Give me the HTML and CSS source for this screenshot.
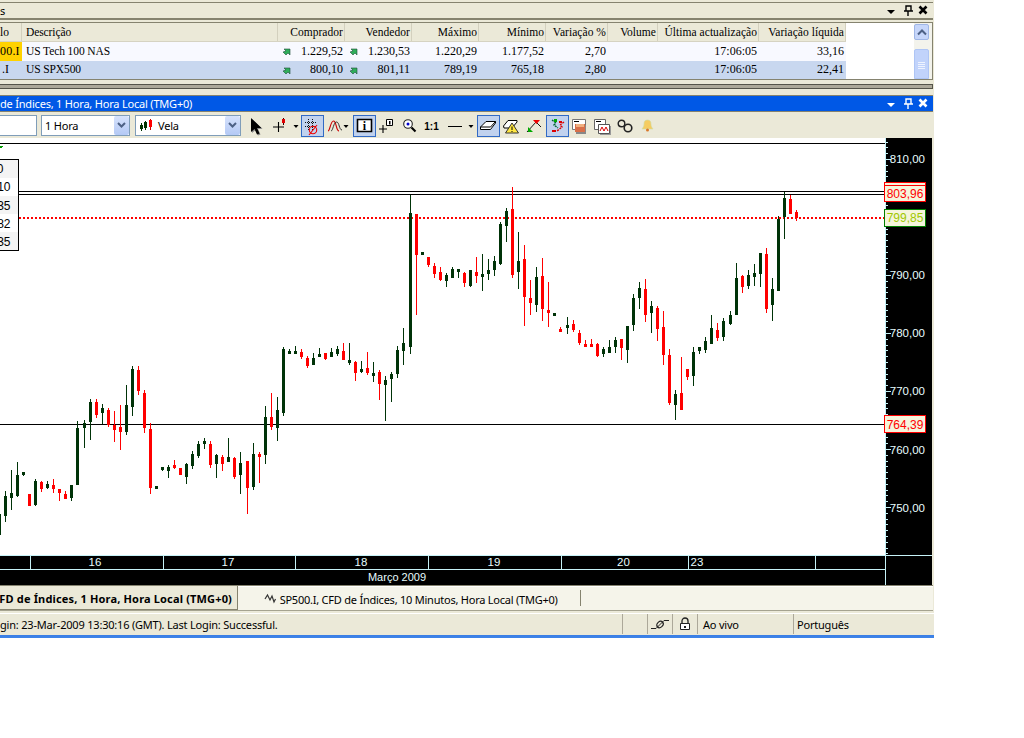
FILE: index.html
```html
<!DOCTYPE html>
<html lang="pt">
<head>
<meta charset="utf-8">
<title>SP500.I</title>
<link rel="stylesheet" href="styles.css">
</head>
<body>
<svg class="defs" width="0" height="0" aria-hidden="true">
  <symbol id="winbtns" viewBox="0 0 48 15">
    <path d="M3 7h8l-4 4z" fill="currentColor"/>
    <path d="M22 3h5v5h-5zM20 8h9M24 8v5" fill="none" stroke="currentColor" stroke-width="1.4"/>
    <path d="M35.5 3.5l7 7M42.500 3.500l-7 7" fill="none" stroke="currentColor" stroke-width="2.6"/>
  </symbol>
  <symbol id="uparrow" viewBox="0 0 8 8">
    <path d="M1 2h6v6L5 6 3 8 0 5l3-1z" fill="#2fae5a" stroke="#1f4f3a" stroke-width=".6"/>
  </symbol>
  <symbol id="chev" viewBox="0 0 15 19">
    <path d="M4 7l3.500 3.500L11 7" fill="none" stroke="#4d6185" stroke-width="2"/>
  </symbol>
</svg>

<div class="app">
  <header class="panel-title">
    <span class="title-text">s</span>
    <svg class="winbtns"><use href="#winbtns"/></svg>
  </header>

  <section class="quotes">
    <div class="grid">
      <div class="row head">
        <span class="c">lo</span>
        <span class="c left">Descrição</span>
        <span class="c num">Comprador</span>
        <span class="c num">Vendedor</span>
        <span class="c num">Máximo</span>
        <span class="c num">Mínimo</span>
        <span class="c num">Variação %</span>
        <span class="c num">Volume</span>
        <span class="c num">Última actualização</span>
        <span class="c num">Variação líquida</span>
      </div>
      <div class="row odd">
        <span class="c sym">00.I</span>
        <span class="c left">US Tech 100 NAS</span>
        <span class="c num arrow"><svg class="up"><use href="#uparrow"/></svg>1.229,52</span>
        <span class="c num arrow"><svg class="up"><use href="#uparrow"/></svg>1.230,53</span>
        <span class="c num">1.220,29</span>
        <span class="c num">1.177,52</span>
        <span class="c num">2,70</span>
        <span class="c num"></span>
        <span class="c num">17:06:05</span>
        <span class="c num">33,16</span>
      </div>
      <div class="row even">
        <span class="c sym2">.I</span>
        <span class="c left">US SPX500</span>
        <span class="c num arrow"><svg class="up"><use href="#uparrow"/></svg>800,10</span>
        <span class="c num arrow"><svg class="up"><use href="#uparrow"/></svg>801,11</span>
        <span class="c num">789,19</span>
        <span class="c num">765,18</span>
        <span class="c num">2,80</span>
        <span class="c num"></span>
        <span class="c num">17:06:05</span>
        <span class="c num">22,41</span>
      </div>
    </div>
    <div class="scrollbar">
      <div class="sb-up"><svg width="14" height="16" viewBox="0 0 14 16"><path d="M3 9.500l4-4 4 4" fill="none" stroke="#4d6185" stroke-width="2"/></svg></div>
      <div class="sb-thumb"><i></i><i></i><i></i><i></i></div>
    </div>
  </section>

  <div class="splitter"></div>

  <header class="chart-title">
    <span class="title-text">de Índices, 1 Hora, Hora Local (TMG+0)</span>
    <svg class="winbtns"><use href="#winbtns"/></svg>
  </header>

  <nav class="toolbar">
    <div class="input"></div>
    <div class="combo c1">
      <span class="combo-text">1 Hora</span>
      <span class="drop"><svg width="15" height="19"><use href="#chev"/></svg></span>
    </div>
    <div class="combo c2">
      <svg class="vela" width="13" height="13" viewBox="0 0 13 13">
        <path d="M1.500 4v8" stroke="#003300"/><path d="M0 6h3v4H0z" fill="#003300"/>
        <path d="M5.500 2v9" stroke="#003300"/><path d="M4 3h3v6H4z" fill="#003300"/>
        <path d="M10.500 0v11" stroke="#c00"/><path d="M9 1h3v7H9z" fill="#f00"/>
      </svg>
      <span class="combo-text">Vela</span>
      <span class="drop"><svg width="15" height="19"><use href="#chev"/></svg></span>
    </div>

    <div class="tools">
      <svg class="t w23" viewBox="0 0 23 22"><path d="M7 4v14l3.500-3 2.500 5.500 2.500-1-2.500-5.500h4.500z" fill="#8a8a8a"/><path d="M6 3v14l3.500-3L12 19.500l2.500-1L12 13h4.500z" fill="#000"/></svg>
      <svg class="t w23" viewBox="0 0 23 22"><path d="M5 12h11M10.500 7v10" stroke="#000" stroke-width="1.100" fill="none"/><path d="M15.500 3v7" stroke="#300"/><path d="M14 4h3v4h-3z" fill="#e00000"/></svg>
      <svg class="t w10" viewBox="0 0 10 22"><path d="M2.500 10h5L5 13z" fill="#000"/></svg>
      <svg class="t w23 on" viewBox="0 0 23 22"><path d="M7.500 4v11M11.500 4v11M4 7.500h11M4 11.500h11" stroke="#111" stroke-dasharray="1 1" fill="none"/><circle cx="12" cy="15" r="3.700" fill="none" stroke="#e00" stroke-width="1.100"/><path d="M8 20l8-10" stroke="#e00" stroke-width="1.100"/></svg>
      <svg class="t w29" viewBox="0 0 29 22"><path d="M4 16C6 16 6.500 6 9.500 6S12 16 15 16" fill="none" stroke="#c00" stroke-width="1.100"/><path d="M7 16C9 16 9.500 7 12.500 7S15 15 18 15" fill="none" stroke="#222" stroke-width=".9"/><path d="M19.500 10h5L22 13z" fill="#000"/></svg>
      <svg class="t w23 on" viewBox="0 0 23 22"><path d="M4.500 4.500h14v12h-14z" fill="#fff" stroke="#000" stroke-width="1.600"/><text class="glyph-i" x="11.500" y="14.500">i</text></svg>
      <svg class="t w22" viewBox="0 0 22 22"><path d="M3 14h8M7 10v8" stroke="#000" stroke-width="1.100" fill="none"/><path d="M10.500 4.500h6v6h-6z" fill="#fff" stroke="#000"/><path d="M13 6h1.500v3.500H13z" fill="#000"/></svg>
      <svg class="t w22" viewBox="0 0 22 22"><circle cx="10" cy="9" r="4.300" fill="#fff" stroke="#222" stroke-width="1.100"/><circle cx="10" cy="9" r="1.500" fill="#00c"/><path d="M13.500 12.500l4 4" stroke="#000" stroke-width="2.200"/></svg>
      <svg class="t w23" viewBox="0 0 23 22"><text class="glyph-11" x="11.500" y="15">1:1</text></svg>
      <svg class="t w34" viewBox="0 0 34 22"><path d="M5 11.500h14" stroke="#000"/><path d="M25.500 10h5L28 13z" fill="#000"/></svg>
      <svg class="t w23 on" viewBox="0 0 23 22"><path d="M3.500 12L9 6.500h9.500V8L13.500 14.500h-10z" fill="#fff" stroke="#000"/><path d="M3.500 12h10l5-5.500" fill="none" stroke="#000"/></svg>
      <svg class="t w22" viewBox="0 0 22 22"><path d="M3.500 11L8 5.500h9V7l-5 6h-8z" fill="#fff" stroke="#000"/><path d="M12 8l6.500 10h-13z" fill="#ffe640" stroke="#333"/><path d="M11.500 11.500h1v3.500h-1zM11.500 16h1v1h-1z" fill="#000"/></svg>
      <svg class="t w24" viewBox="0 0 24 22"><path d="M5 17l9-10 5 5" fill="none" stroke="#000" stroke-width=".9"/><path d="M11 5h7l-3.500 4z" fill="#e00"/><path d="M6 17v-5l5 5z" fill="#0a0"/></svg>
      <svg class="t w23 on" viewBox="0 0 23 22"><path d="M6 5l4 3-2 2 4 3" fill="none" stroke="#063" stroke-width="1.400" stroke-dasharray="2 1"/><path d="M8 4h3v3H8z" fill="#0a0"/><path d="M18 7l-4 3 2 2-5 4" fill="none" stroke="#d00" stroke-width="1.400" stroke-dasharray="2 1"/><path d="M6 15h4v2H6zM13 6h3v2h-3z" fill="#d00"/></svg>
      <svg class="t w23" viewBox="0 0 23 22"><path d="M3.500 4.500h13v10h-13z" fill="#fff" stroke="#777"/><path d="M5 6h5v1H5z" fill="#000"/><path d="M7 10h10v9H7z" fill="#888"/><path d="M6 9h10v8H6z" fill="#d9704a"/><path d="M7 9h8v3H7z" fill="#f0b080"/></svg>
      <svg class="t w22" viewBox="0 0 22 22"><path d="M2.500 4.500h11v10h-11z" fill="#fff" stroke="#666"/><path d="M4 6h5v1H4z" fill="#000"/><path d="M8 11h11v9H8z" fill="#999"/><path d="M6.500 9.500h11v9h-11z" fill="#fff" stroke="#555"/><path d="M8 16l2-4 2 4 2-4 2 4" fill="none" stroke="#d00"/></svg>
      <svg class="t w22" viewBox="0 0 22 22"><circle cx="7.500" cy="8.500" r="3.300" fill="none" stroke="#222" stroke-width="1.400"/><circle cx="14" cy="13" r="3.800" fill="none" stroke="#222" stroke-width="1.600"/></svg>
      <svg class="t w23" viewBox="0 0 23 22"><path d="M11.500 5c3 0 3.500 2 3.500 4 0 3 1.500 4 2 5H6c.5-1 2-2 2-5 0-2 .5-4 3.500-4z" fill="#f5cc60" stroke="#cda" stroke-width=".6"/><circle cx="11.500" cy="15" r="1.500" fill="#d9772a"/></svg>
    </div>
  </nav>

  <div class="chart">
    <svg class="plot" width="932" height="447" viewBox="0 138 932 447">
      <g shape-rendering="crispEdges">
        <rect x="0" y="138" width="885" height="417" fill="#fff"/>
        <rect x="885" y="138" width="47" height="447" fill="#000"/>
        <rect x="0" y="555" width="885" height="30" fill="#000"/>
        <rect x="0" y="143" width="885" height="1" fill="#000"/>
        <rect x="19" y="191" width="866" height="1" fill="#000"/>
        <rect x="19" y="194" width="866" height="1" fill="#000"/>
        <rect x="0" y="424" width="885" height="1" fill="#000"/>
        <path d="M19 218H885" stroke="#f00" stroke-width="2" stroke-dasharray="2 2"/>
        <path d="M0 146h3l-1 2h-2z" fill="#090"/>
      </g>
      <g id="candles" shape-rendering="crispEdges"></g>
      <g shape-rendering="crispEdges">
        <rect x="-1" y="159" width="20" height="92" fill="#000"/>
        <rect x="0" y="160" width="18" height="18" fill="#f4f4f4"/>
        <rect x="0" y="178" width="18" height="18" fill="#fff"/>
        <rect x="0" y="196" width="18" height="18" fill="#f4f4f4"/>
        <rect x="0" y="214" width="18" height="18" fill="#fff"/>
        <rect x="0" y="232" width="18" height="18" fill="#f4f4f4"/>
      </g>
      <g class="legend">
        <text x="3.500" y="173">0</text>
        <text x="10.500" y="191">10</text>
        <text x="10.500" y="210">35</text>
        <text x="10.500" y="228">82</text>
        <text x="10.500" y="246">35</text>
      </g>
      <g id="ticks" shape-rendering="crispEdges"></g>
      <g stroke="#c6f2f7" shape-rendering="crispEdges">
        <path d="M885.500 138V585M0 555.500H932M0 569.500H885"/>
        <path d="M30.500 555V570M163.500 555V570M295.500 555V570M428.500 555V570M561.500 555V570M688.500 555V570M815.500 555V570"/>
      </g>
      <g class="axis">
        <text class="end" x="925" y="163">810,00</text>
        <text class="end" x="925" y="279">790,00</text>
        <text class="end" x="925" y="337">780,00</text>
        <text class="end" x="925" y="395">770,00</text>
        <text class="end" x="925" y="454">760,00</text>
        <text class="end" x="925" y="512">750,00</text>
        <text class="mid" x="95" y="566">16</text>
        <text class="mid" x="228" y="566">17</text>
        <text class="mid" x="361" y="566">18</text>
        <text class="mid" x="494" y="566">19</text>
        <text class="mid" x="623.500" y="566">20</text>
        <text class="mid" x="697" y="566">23</text>
        <text class="mid small" x="397" y="581">Março 2009</text>
      </g>
      <g shape-rendering="crispEdges" fill="#f5f5dc">
        <rect x="884.500" y="182.500" width="41" height="19" stroke="#f00"/>
        <path d="M885 185.500H925" stroke="#f00" fill="none"/>
        <rect x="884.500" y="209.500" width="41" height="17" stroke="#008000"/>
        <rect x="884.500" y="415.500" width="41" height="17" stroke="#f00"/>
      </g>
      <g class="tags">
        <text class="red" x="905" y="198">803,96</text>
        <text class="lime" x="905" y="222">799,85</text>
        <text class="red" x="905" y="428.500">764,39</text>
      </g>
    </svg>
  </div>

  <div class="tabs">
    <div class="tab active">FD de Índices, 1 Hora, Hora Local (TMG+0)</div>
    <div class="tab other">
      <svg class="tab-ico" width="13" height="11" viewBox="0 0 13 11"><path d="M1 6l2.500-4 2.500 5 2-4 2 6 1.500-3" fill="none" stroke="#333" stroke-width="1.200"/></svg>
      SP500.I, CFD de Índices, 10 Minutos, Hora Local (TMG+0)
    </div>
  </div>

  <footer class="status">
    <span class="st msg">gin: 23-Mar-2009 13:30:16 (GMT). Last Login: Successful.</span>
    <span class="st blank"></span>
    <span class="st ico"><svg width="18" height="12" viewBox="0 0 18 12"><path d="M0 10.500h5M13 2.500h5" stroke="#222" fill="none"/><ellipse cx="9" cy="6.500" rx="3.500" ry="2.800" transform="rotate(-40 9 6.500)" fill="none" stroke="#222" stroke-width="1.200"/><path d="M5 10.500L13 2.500" stroke="#222" fill="none"/></svg></span>
    <span class="st ico"><svg width="12" height="14" viewBox="0 0 12 14"><path d="M3 6.500V4a3 3 0 016 0v2.500" fill="none" stroke="#222" stroke-width="1.300"/><path d="M1.500 6.500h9v6h-9z" fill="#fff" stroke="#222"/><path d="M5 9h2v2H5z" fill="#222"/></svg></span>
    <span class="st live">Ao vivo</span>
    <span class="st lang">Português</span>
  </footer>
  <div class="bluebar"></div>
</div>
<script src="script.js"></script>
</body>
</html>
```
FILE: styles.css
```css
html, body { margin: 0; padding: 0; background: #fff; }
.defs { position: absolute; }
.app {
  width: 934px;
  height: 638px;
  overflow: hidden;
  background: #ebe9d8;
  display: flex;
  flex-direction: column;
  font-family: "Noto Sans", "DejaVu Sans", sans-serif;
  font-size: 11px;
  color: #000;
}
.panel-title, .chart-title {
  display: flex;
  align-items: center;
  justify-content: space-between;
  height: 15px;
  flex: none;
  width: 932px;
  overflow: hidden;
  white-space: nowrap;
}
.panel-title {
  margin-top: 2px;
  border-top: 1px solid #85836f;
  border-bottom: 2px solid #85836f;
  width: 933px;
  box-sizing: content-box;
}
.chart-title {
  background: #0058e6;
  color: #fff;
  border-top: 1px solid #85836f;
  border-bottom: 1px solid #85836f;
  margin-top: 6px;
  width: 933px;
}
.title-text { line-height: 15px; letter-spacing: -.2px; }
.winbtns { width: 48px; height: 15px; flex: none; margin-right: 1px; display: block; }
.panel-title .winbtns { color: #000; }

.quotes {
  margin-top: 2px;
  flex: none;
  display: flex;
  height: 56px;
  width: 932px;
  border-top: 1px solid #85836f;
  border-bottom: 1px solid #85836f;
  background: #fff;
  border-right: 1px solid #85836f;
}
.grid {
  flex: 1;
  font-family: "Liberation Serif", "DejaVu Serif", serif;
  font-size: 12px;
  overflow: hidden;
  white-space: nowrap;
}
.row {
  display: grid;
  grid-template-columns: 22px 256px 67px 67px 67px 67px 62px 50px 101px 87px;
  width: 846px;
  height: 18px;
  line-height: 18px;
}
.row.head {
  height: 18px;
  background: #ebe9d8;
  border-bottom: 1px solid #d6d3c2;
  font-size: 11.5px;
  letter-spacing: .05px;
}
.row.head .c { border-right: 1px solid #d3d0be; box-sizing: border-box; }
.row.odd { height: 19px; line-height: 19px; background: #f8f9ff; }
.row.even { line-height: 17px; background: #c8d7ef; }
.c { display: block; overflow: hidden; }
.left { padding-left: 4px; font-size: 11.5px; letter-spacing: -.1px; }
.num { text-align: right; padding-right: 2px; position: relative; }
.row.head .num { padding-right: 1px; }
.sym { background: #ffd200; letter-spacing: .2px; }
.sym2 { padding-left: 2px; }
.up { position: absolute; left: 5px; top: 5px; width: 8px; height: 8px; }

.scrollbar {
  width: 18px;
  flex: none;
  background: #f3f3ec;
  display: flex;
  flex-direction: column;
}
.sb-up {
  height: 16px;
  width: 15px;
  margin-top: 1px;
  background: #c6d6fa;
  border: 1px solid #9fb6e6;
  border-radius: 2px;
  box-sizing: border-box;
}
.sb-up svg { display: block; }
.sb-thumb {
  margin-top: 9px;
  width: 15px;
  flex: 1;
  background: #c1d3fb;
  border-radius: 2px 2px 0 0;
  border: 1px solid #aec5f5;
  box-sizing: border-box;
  padding-top: 12px;
  display: flex;
  flex-direction: column;
  align-items: center;
  gap: 1px;
}
.sb-thumb i { display: block; width: 7px; height: 1px; background: #eef3ff; }

.splitter {
  flex: none;
  margin-top: 4px;
  height: 3px;
  width: 932px;
  background: #aca899;
  border: 1px solid #55544a;
  border-left: 0;
}

.toolbar {
  flex: none;
  height: 26px;
  box-sizing: border-box;
  padding-top: 3px;
  width: 932px;
  display: flex;
  align-items: flex-start;
}
.input {
  width: 37px;
  height: 21px;
  box-sizing: border-box;
  background: #fff;
  border: 1px solid #7f9db9;
  border-left: 0;
  margin-right: 4px;
}
.combo {
  height: 21px;
  box-sizing: border-box;
  background: #fff;
  border: 1px solid #7f9db9;
  display: flex;
  align-items: center;
  font-size: 11px;
  letter-spacing: -.2px;
  margin-right: 4px;
  padding-left: 3px;
}
.combo.c1 { width: 89px; margin-right: 5px; }
.combo.c2 { width: 106px; }
.combo-text { flex: 1; line-height: 19px; }
.vela { margin: 0 5px 0 1px; flex: none; }
.drop {
  width: 15px;
  height: 19px;
  flex: none;
  background: linear-gradient(#d6e2fc, #b4c9f5);
  border-radius: 2px;
}
.drop svg { display: block; }
.tools { display: flex; align-items: flex-start; }
.t { display: block; height: 22px; flex: none; }
.w10 { width: 10px; }
.w22 { width: 22px; }
.w23 { width: 23px; }
.w24 { width: 24px; }
.w29 { width: 29px; }
.w34 { width: 34px; }
.t.on { background: #c1d2ee; outline: 1px solid #316ac5; outline-offset: -1px; }
.glyph-i { font: bold 12px "Liberation Serif", serif; text-anchor: middle; }
.glyph-11 { font: bold 10px "Liberation Sans", sans-serif; text-anchor: middle; }

.chart { flex: none; height: 447px; width: 933px; }
.plot { display: block; }
.legend text { font: 12px "Liberation Sans", sans-serif; text-anchor: end; fill: #000; }
.axis text { font: 11.500px "Liberation Sans", sans-serif; fill: #e8fdff; }
.axis .end { text-anchor: end; }
.axis .mid { text-anchor: middle; }
.axis .small { font-size: 11px; }
.tags text { font: 12px "Liberation Sans", sans-serif; text-anchor: middle; }
.tags .red { fill: #f00; }
.tags .lime { fill: #a0c800; }

.tabs {
  flex: none;
  display: flex;
  height: 24px;
  width: 933px;
  border-top: 1px solid #85836f;
  border-bottom: 1px solid #a5a390;
  white-space: nowrap;
  overflow: hidden;
}
.tab { height: 24px; line-height: 26px; box-sizing: border-box; }
.tab.active {
  width: 238px;
  flex: none;
  text-align: right;
  font-weight: 700;
  padding-right: 5px;
  border-right: 1px solid #85836f;
  border-bottom: 1px solid #85836f;
  overflow: hidden;
  letter-spacing: .16px;
  direction: ltr;
  display: flex;
  justify-content: flex-end;
}
.tab.other {
  flex: 1;
  background: #f5f4ea;
  border-top: 1px solid #fff;
  padding-left: 26px;
  letter-spacing: -.23px;
  position: relative;
}
.tab.other::after {
  content: "";
  position: absolute;
  left: 342px;
  top: 3px;
  height: 16px;
  width: 1px;
  background: #85836f;
}
.tab-ico { margin-right: 0; }

.status {
  flex: none;
  margin-top: 3px;
  height: 21px;
  border-top: 0;
  box-shadow: 0 -1px 0 #fff;
  display: flex;
  white-space: nowrap;
  line-height: 21px;
  letter-spacing: -.2px;
}
.st { display: flex; align-items: center; box-sizing: border-box; flex: none; border-right: 1px solid #aca899; height: 20px; }
.msg { width: 623px; }
.blank { width: 25px; }
.ico { width: 25px; justify-content: center; }
.live { width: 96px; padding-left: 5px; }
.lang { border-right: 0; padding-left: 3px; width: 140px; }
.bluebar { flex: none; height: 4px; background: linear-gradient(#3a7ee4, #3f86ea); }
```
FILE: script.js
```js
// Candle data read from the chart: [x, colour, wick top, body top, body bottom, wick bottom]
var G = 0, R = 1;
var sets = [
  { x0: 0, y0: 340, bars: [
    [-3,G,522,522,585,585],[16,G,453,468,528,545],[34,G,390,459,474,510],[52,G,366,405,468,470],[70,G,396,396,405,408],
    [88,R,462,462,498,498],[106,G,417,423,495,498],[124,R,423,426,447,456],[142,G,423,432,444,447],[160,R,417,435,447,459],
    [178,R,447,447,459,483],[196,R,453,462,477,477],[214,G,435,435,474,483],[232,G,243,264,435,435],[253,G,240,249,264,324],
    [271,G,177,186,246,300],[289,R,177,186,225,234],[307,G,192,204,219,252],[325,R,204,210,255,261],[343,R,213,255,270,306],
    [361,R,195,261,276,330],[379,G,135,195,276,285],[397,G,78,87,201,228],[415,R,78,90,153,165],[433,R,150,159,264,279],
    [451,R,249,267,444,462],[469,G,438,438,447,447],[487,G,381,381,390,393],[505,G,375,381,393,414],[523,R,360,375,384,387],
    [541,R,384,384,405,405],[559,G,369,372,411,432],[577,G,333,342,378,387],[595,G,303,312,348,354],[613,G,294,303,312,327],
    [631,R,303,312,375,384],[649,G,342,345,372,414],[667,R,345,351,372,393],[685,G,294,351,366,366],[703,R,351,354,411,417],
    [721,G,336,369,405,462],[742,R,363,363,444,522],[760,G,309,342,441,450],[778,R,336,342,351,429],[796,G,198,231,345,372],
    [814,R,159,231,261,270],[832,G,171,210,264,303],[850,G,21,27,219,228],[868,G,27,33,42,42],[886,G,18,33,42,42]
  ]},
  { x0: 270, y0: 180, bars: [
    [94,R,507,516,531,537],[112,R,528,534,558,564],[130,G,519,534,555,555],[148,G,504,522,531,531],[166,R,519,519,537,540],
    [184,G,504,516,531,531],[202,G,498,507,522,528],[220,R,489,513,540,540],[238,G,489,540,549,555],[256,R,543,546,579,603],
    [274,G,543,567,576,579],[292,R,516,564,579,585],[310,G,546,579,588,606],[328,R,570,576,612,660],[346,G,588,600,615,723],
    [364,G,576,582,597,666],[382,G,498,510,582,594],[400,G,444,489,513,555],[421,G,44,99,501,522],[439,R,102,102,225,405],
    [457,G,216,216,225,225],[475,R,231,231,255,261],[493,R,249,258,282,294],[511,R,261,276,300,303],[529,G,279,285,303,321],
    [547,G,261,267,294,294],[565,G,267,267,276,294],[583,R,276,279,309,321],[601,G,270,270,318,321],[619,R,231,276,288,309],
    [637,G,222,282,291,333],[655,G,237,270,282,300],[673,G,228,243,270,288],[691,G,126,132,252,255],[709,G,84,93,138,186],
    [727,R,21,87,285,294],[745,G,156,243,276,327],[763,R,195,237,351,438],[781,R,300,354,369,405],[799,G,261,291,375,396],
    [817,R,234,288,387,423],[835,R,306,390,399,441],[853,G,399,399,408,408],[871,R,441,447,456,456],[892,G,411,435,444,462]
  ]},
  { x0: 560, y0: 180, bars: [
    [40,R,420,432,450,456],[58,R,450,459,489,495],[76,R,480,492,501,501],[94,R,477,492,501,501],[112,R,489,492,528,531],
    [130,G,501,507,522,531],[148,G,480,501,519,519],[166,G,471,480,501,519],[184,R,477,477,504,540],[202,G,438,438,510,549],
    [220,G,342,354,435,453],[238,G,306,324,354,387],[256,R,297,327,405,426],[274,G,363,378,399,459],[292,R,378,384,447,483],
    [310,R,393,441,525,555],[328,R,507,525,669,675],[346,G,630,642,675,720],[364,R,531,639,690,690],[382,R,567,567,591,600],
    [400,G,501,516,588,618],[418,G,501,501,513,522],[436,G,471,483,510,519],[454,G,405,444,492,492],[472,R,429,450,474,483],
    [490,G,414,423,471,483],[511,G,393,405,432,435],[529,G,249,294,405,405],[547,R,285,288,321,339],[565,G,270,285,318,327],
    [583,G,252,279,291,318],[601,G,219,219,282,321],[619,R,204,222,387,399],[637,G,294,327,375,423],[655,G,108,117,333,333],
    [673,G,36,54,111,177],[691,R,45,57,102,102],[709,R,90,96,114,123]
  ]}
];
var NS = "http://www.w3.org/2000/svg";
function rect(parent, x, y, w, h, fill) {
  var r = document.createElementNS(NS, "rect");
  r.setAttribute("x", x); r.setAttribute("y", y);
  r.setAttribute("width", w); r.setAttribute("height", h);
  r.setAttribute("fill", fill);
  parent.appendChild(r);
}
var g = document.getElementById("candles");
sets.forEach(function (s) {
  s.bars.forEach(function (b) {
    var px = s.x0 + Math.floor(b[0] / 3);
    var col = b[1] === G ? "#003308" : "#ff0000";
    rect(g, px, s.y0 + b[2] / 3, 1, (b[5] - b[2]) / 3, col);
    rect(g, px - 1, s.y0 + b[3] / 3, 3, (b[4] - b[3]) / 3, col);
  });
});
var t = document.getElementById("ticks");
for (var i = -3; i * 5.8 + 159 < 555; i++) {
  var major = ((i % 10) + 10) % 10 === 0;
  rect(t, 885, Math.round(159 + i * 5.8), major ? 6 : 3, 1, "#c6f2f7");
}
```
